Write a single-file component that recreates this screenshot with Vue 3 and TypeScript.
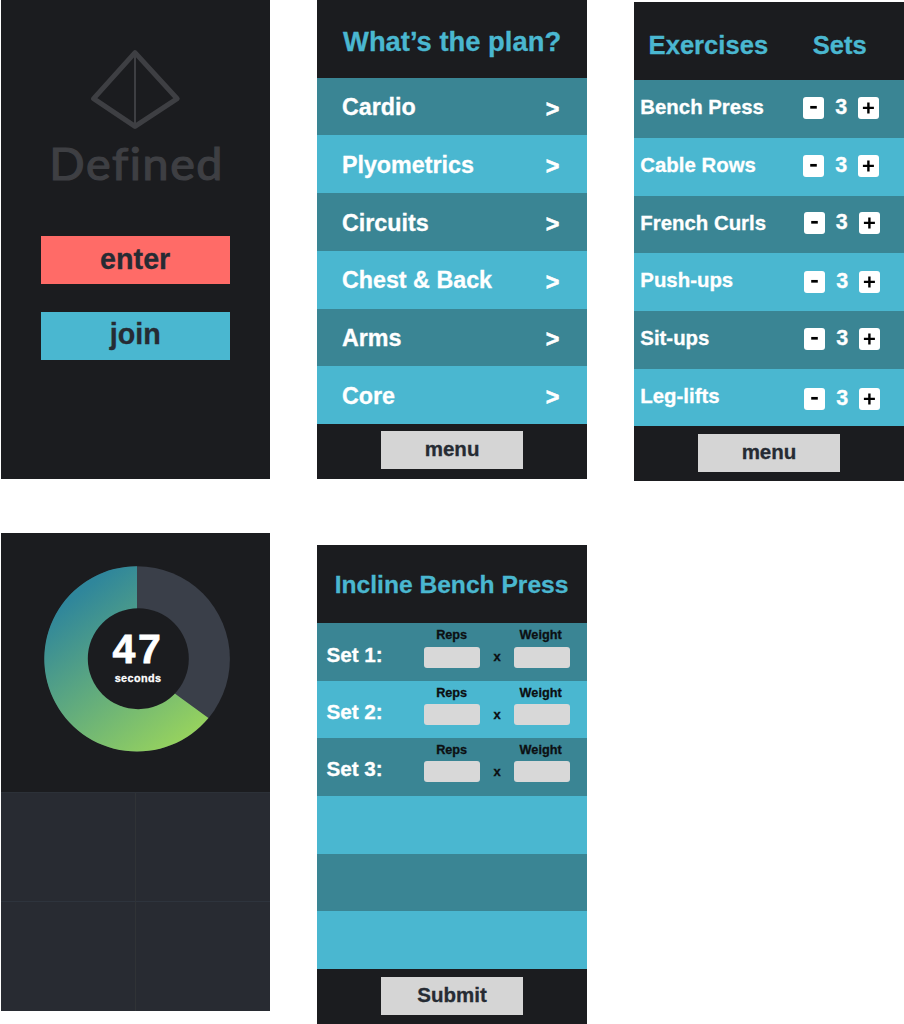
<script setup lang="ts">
interface Exercise {
  name: string
  sets: number
  top: number
  left: number
}

const plans: string[] = ['Cardio', 'Plyometrics', 'Circuits', 'Chest & Back', 'Arms', 'Core']

const exercises: Exercise[] = [
  { name: 'Bench Press', sets: 3, top: 17.3, left: 0 },
  { name: 'Cable Rows', sets: 3, top: 17.3, left: 0 },
  { name: 'French Curls', sets: 3, top: 16.7, left: 0.5 },
  { name: 'Push-ups', sets: 3, top: 18, left: 1 },
  { name: 'Sit-ups', sets: 3, top: 17.3, left: 1 },
  { name: 'Leg-lifts', sets: 3, top: 19.7, left: 1 },
]

const setRows = [
  { label: 'Set 1:', top: 24.4 },
  { label: 'Set 2:', top: 23.6 },
  { label: 'Set 3:', top: 23 },
]
</script>

<template>
  <main class="board">
    <div class="column">
      <section class="panel welcome">
        <svg class="logo" width="92" height="84" viewBox="89 48 92 84" fill="none">
          <path d="M135 52.6 L177.2 98.7 L135 126.4 L93.6 98.7 Z" stroke="#3e3f43" stroke-width="5" stroke-linejoin="round" />
          <path d="M135 54 V125" stroke="#3e3f43" stroke-width="2" />
        </svg>
        <h1 class="brand"><span>Defined</span></h1>
        <button class="cta enter">enter</button>
        <button class="cta join">join</button>
      </section>

      <section class="panel timer">
        <div class="dial">
          <svg class="ring" width="188" height="188" viewBox="43 565 188 188">
            <defs>
              <linearGradient id="progress" gradientUnits="userSpaceOnUse" x1="72" y1="598" x2="186" y2="747">
                <stop offset="0" stop-color="#2f869b" />
                <stop offset="1" stop-color="#9ad55c" />
              </linearGradient>
            </defs>
            <circle cx="137.2" cy="658.9" r="92.7" fill="#3a3f49" />
            <path d="M137 666.1 V566.2 A92.7 92.7 0 1 0 208.4 718 Z" fill="url(#progress)" />
            <circle cx="138.3" cy="658.7" r="50.5" fill="#1b1c1f" />
          </svg>
          <div class="readout">
            <strong>47</strong>
            <span>seconds</span>
          </div>
        </div>
        <div class="tiles">
          <div v-for="n in 4" :key="n" class="tile"></div>
        </div>
      </section>
    </div>

    <div class="column middle">
      <section class="panel plan">
        <header class="head plan-head">What’s the plan?</header>
        <ul class="rows">
          <li v-for="plan in plans" :key="plan" class="row plan-row">
            <span>{{ plan }}</span>
            <span class="arrow">&gt;</span>
          </li>
        </ul>
        <footer class="foot"><button class="grey">menu</button></footer>
      </section>

      <section class="panel entry">
        <header class="head entry-head">Incline Bench Press</header>
        <ul class="rows">
          <li v-for="row in setRows" :key="row.label" class="row set-row">
            <span class="set-label" :style="{ marginTop: row.top - 4 + 'px' }">{{ row.label }}</span>
            <div class="field">
              <label>Reps</label>
              <div class="box" :style="{ marginTop: row.top - 18 + 'px' }"></div>
            </div>
            <span class="times">x</span>
            <div class="field">
              <label class="weight">Weight</label>
              <div class="box" :style="{ marginTop: row.top - 18 + 'px' }"></div>
            </div>
          </li>
          <li v-for="n in 3" :key="n" class="row"></li>
        </ul>
        <footer class="foot"><button class="grey">Submit</button></footer>
      </section>
    </div>

    <div class="column right">
      <section class="panel sets">
        <header class="head sets-head"><span>Exercises</span><span>Sets</span></header>
        <ul class="rows">
          <li v-for="ex in exercises" :key="ex.name" class="row ex-row">
            <span class="ex-name">{{ ex.name }}</span>
            <div class="stepper" :style="{ marginTop: ex.top + 'px', marginLeft: ex.left + 'px' }">
              <button class="step">
                <svg width="21" height="22" viewBox="0 0 21 22"><path d="M7.2 10.3h6.6" stroke="#000" stroke-width="2.7" /></svg>
              </button>
              <span class="count">{{ ex.sets }}</span>
              <button class="step">
                <svg width="21" height="22" viewBox="0 0 21 22"><path d="M4.9 10.9h11M10.4 5.4v11" stroke="#000" stroke-width="2.4" /></svg>
              </button>
            </div>
          </li>
        </ul>
        <footer class="foot"><button class="grey">menu</button></footer>
      </section>
    </div>
  </main>
</template>

<style>
html,
body {
  background: #fff;
  overflow: hidden;
}
</style>

<style scoped>
.board {
  box-sizing: border-box;
  width: 904px;
  height: 1024px;
  display: flex;
  gap: 47px;
  padding-left: 1px;
  overflow: hidden;
  font-family: 'Liberation Sans', Arial, sans-serif;
  font-weight: bold;
  white-space: nowrap;
  -webkit-text-stroke: 0.3px currentColor;
}
.column {
  width: 269.4px;
  flex: none;
  display: flex;
  flex-direction: column;
  gap: 53.9px;
}
.middle {
  gap: 66.3px;
}
.right {
  width: 270.4px;
  padding-top: 2.4px;
}
.panel {
  height: 478.8px;
  flex: none;
  display: flex;
  flex-direction: column;
  background: #1b1c1f;
}
button {
  display: block;
  margin: 0;
  padding: 0;
  border: 0;
  font: inherit;
}

.welcome {
  align-items: center;
}
.logo {
  display: block;
  margin: 48px 0 0 -1px;
}
.brand {
  margin: 2px 0 0;
  height: 62px;
  line-height: 59px;
  width: 172px;
  display: flex;
  justify-content: center;
  color: #3e3f43;
  font-family: Lato, sans-serif;
  font-size: 43.5px;
  font-weight: 400;
  -webkit-text-stroke: 1.2px currentColor;
}
.brand span {
  letter-spacing: 1.5px;
  margin-right: -1px;
  transform: scaleX(1.07);
}
.cta {
  width: 189px;
  height: 47.5px;
  color: #262b33;
  font-size: 28.7px;
}
.enter {
  margin-top: 40px;
  padding: 0 1px 1px 0;
  background: #ff6b67;
}
.join {
  margin-top: 28.5px;
  padding: 0 1px 3px 0;
  background: #4ab7d0;
}

.dial {
  height: 259.6px;
  flex: none;
  display: grid;
}
.ring {
  grid-area: 1 / 1;
  margin: 32.3px 0 0 42px;
}
.readout {
  grid-area: 1 / 1;
  z-index: 1;
  width: 274px;
  padding-top: 95px;
  display: flex;
  flex-direction: column;
  align-items: center;
  color: #fff;
}
.readout strong {
  font-size: 41px;
  line-height: 42px;
  letter-spacing: 2.8px;
  -webkit-text-stroke: 0.8px currentColor;
}
.readout span {
  margin-top: 2.5px;
  font-size: 10.8px;
  line-height: 12px;
  letter-spacing: 0.4px;
}
.tiles {
  flex: 1;
  display: grid;
  grid-template-columns: 1fr 1fr;
  grid-template-rows: 1fr 1fr;
  background: #282b32;
  border-top: 1px solid #2c3138;
}
.tile:nth-child(odd) {
  border-right: 1px solid #303336;
}
.tile:nth-child(-n + 2) {
  border-bottom: 1px solid #2e343d;
}

.head {
  height: 77.8px;
  flex: none;
  display: flex;
  align-items: center;
  justify-content: center;
  color: #4ab7d0;
}
.plan-head {
  font-size: 27.4px;
  box-sizing: border-box;
  padding-top: 6px;
}
.entry-head {
  font-size: 24.6px;
  box-sizing: border-box;
  padding: 2px 1px 0 0;
}
.sets-head {
  box-sizing: border-box;
  justify-content: space-between;
  padding: 8px 37.4px 0 14.8px;
  font-size: 25.6px;
}
.rows {
  margin: 0;
  padding: 0;
  list-style: none;
}
.row {
  height: 57.7px;
  display: flex;
  background: #4ab7d0;
  color: #fff;
}
.row:nth-child(odd) {
  background: #3a8594;
}
.plan-row {
  box-sizing: border-box;
  align-items: center;
  justify-content: space-between;
  padding: 2px 27.5px 0 24.5px;
  font-size: 23.3px;
}
.arrow {
  padding-top: 3px;
  -webkit-text-stroke: 0.6px currentColor;
}
.foot {
  padding: 7.5px 0 0 63.7px;
}
.right .foot {
  padding-left: 64.2px;
}
.grey {
  width: 142px;
  height: 38px;
  background: #d5d5d5;
  color: #262b33;
  font-size: 20.5px;
  padding-bottom: 2px;
}

.ex-row {
  font-size: 20.4px;
}
.ex-name {
  width: 169.5px;
  box-sizing: border-box;
  padding-left: 6.5px;
  line-height: 55.5px;
  flex: none;
}
.stepper {
  display: flex;
  height: 22px;
}
.step {
  width: 21px;
  height: 22px;
  border-radius: 3px;
  background: #fff;
}
.step svg {
  display: block;
}
.count {
  width: 34px;
  text-align: center;
  font-size: 21.5px;
  line-height: 21px;
}

.set-row {
  box-sizing: border-box;
  padding-left: 9px;
}
.set-label {
  width: 98px;
  flex: none;
  font-size: 20.7px;
  line-height: 24px;
}
.field {
  width: 55.5px;
  flex: none;
}
.field label {
  display: flex;
  justify-content: center;
  height: 18px;
  padding-right: 1px;
  line-height: 24px;
  font-size: 12.7px;
  color: #0c0f12;
}
.field .weight {
  padding-right: 3px;
}
.box {
  height: 20.6px;
  border-radius: 3px;
  background: #d8d8d8;
}
.times {
  width: 34.5px;
  text-align: center;
  font-size: 13px;
  line-height: 68px;
  color: #0c0f12;
}
</style>
